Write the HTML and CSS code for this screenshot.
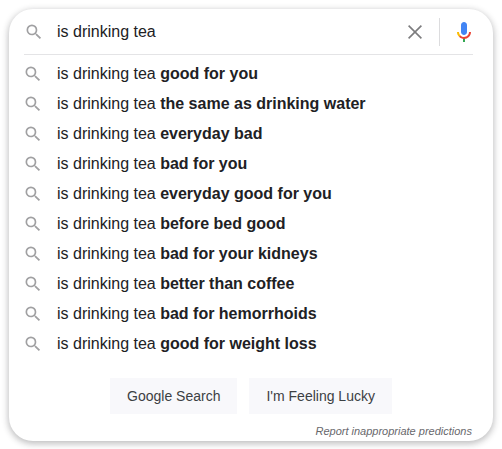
FILE: index.html
```html
<!DOCTYPE html>
<html lang="en">
<head>
    <meta charset="UTF-8">
    <meta name="viewport" content="width=device-width, initial-scale=1.0">
    <title>is drinking tea</title>
    <link rel="stylesheet" href="styles.css">
</head>
<body>
    <svg class="sprite" aria-hidden="true">
        <symbol id="magnifier" viewBox="0 0 24 24">
            <path d="M15.5 14h-.79l-.28-.27A6.471 6.471 0 0 0 16 9.5 6.5 6.5 0 1 0 9.5 16c1.61 0 3.09-.59 4.23-1.57l.27.28v.79l5 4.99L20.49 19l-4.99-5zm-6 0C7.01 14 5 11.99 5 9.5S7.01 5 9.5 5 14 7.01 14 9.5 11.99 14 9.5 14z"/>
        </symbol>
    </svg>
    <form class="search-card" action="#">
        <div class="search-bar">
            <svg class="icon"><use href="#magnifier"/></svg>
            <input type="text" class="search-input" name="q" value="is drinking tea" aria-label="Search" autocomplete="off">
            <button type="reset" class="icon-button clear" aria-label="Clear">
                <svg viewBox="0 0 24 24"><path d="M5.6 5.6l12.8 12.8M18.4 5.6L5.6 18.4"/></svg>
            </button>
            <button type="button" class="icon-button" aria-label="Search by voice">
                <svg viewBox="0 0 24 24">
                    <path fill="#4285f4" d="M12 15c1.66 0 3-1.31 3-2.97V5.01C15 3.35 13.66 2 12 2S9 3.34 9 5.01v7.02C9 13.69 10.34 15 12 15z"/>
                    <path fill="#34a853" d="M11 18.08h2V22h-2z"/>
                    <path fill="#fbbc05" d="M7.05 16.87C5.78 15.54 5 14.04 5 12h2c0 1.45.56 2.42 1.47 3.38v.32l-1.15 1.18z"/>
                    <path fill="#ea4335" d="M12 16.93a4.97 5.25 0 0 1-3.54-1.55l-1.41 1.49C8.31 18.21 10.07 19 12 19c3.87 0 6.99-2.92 6.99-7H17c0 2.92-2.24 4.93-5 4.93z"/>
                </svg>
            </button>
        </div>
        <hr class="separator">
        <ul class="suggestions">
            <li><a href="#"><svg class="icon"><use href="#magnifier"/></svg><span>is drinking tea <b>good for you</b></span></a></li>
            <li><a href="#"><svg class="icon"><use href="#magnifier"/></svg><span>is drinking tea <b>the same as drinking water</b></span></a></li>
            <li><a href="#"><svg class="icon"><use href="#magnifier"/></svg><span>is drinking tea <b>everyday bad</b></span></a></li>
            <li><a href="#"><svg class="icon"><use href="#magnifier"/></svg><span>is drinking tea <b>bad for you</b></span></a></li>
            <li><a href="#"><svg class="icon"><use href="#magnifier"/></svg><span>is drinking tea <b>everyday good for you</b></span></a></li>
            <li><a href="#"><svg class="icon"><use href="#magnifier"/></svg><span>is drinking tea <b>before bed good</b></span></a></li>
            <li><a href="#"><svg class="icon"><use href="#magnifier"/></svg><span>is drinking tea <b>bad for your kidneys</b></span></a></li>
            <li><a href="#"><svg class="icon"><use href="#magnifier"/></svg><span>is drinking tea <b>better than coffee</b></span></a></li>
            <li><a href="#"><svg class="icon"><use href="#magnifier"/></svg><span>is drinking tea <b>bad for hemorrhoids</b></span></a></li>
            <li><a href="#"><svg class="icon"><use href="#magnifier"/></svg><span>is drinking tea <b>good for weight loss</b></span></a></li>
        </ul>
        <div class="actions">
            <button type="submit" class="action">Google Search</button>
            <button type="submit" class="action">I'm Feeling Lucky</button>
        </div>
        <a class="report" href="#">Report inappropriate predictions</a>
    </form>
</body>
</html>
```

FILE: styles.css
```css
* {
    box-sizing: border-box;
}
body {
    margin: 0;
    padding: 9px;
    background: #fff;
    color: #212124;
    font-family: "Liberation Sans", Arial, sans-serif;
    font-size: 16px;
}
.sprite {
    display: none;
}
.search-card {
    display: flex;
    flex-direction: column;
    background: #fff;
    border-radius: 24px;
    box-shadow: 0 2px 6px 1px rgba(32, 33, 36, 0.28);
}
.search-bar {
    display: flex;
    align-items: center;
    height: 45px;
    padding: 0 17px 0 15px;
}
.icon {
    flex: none;
    width: 20px;
    height: 20px;
    margin-right: 13px;
    fill: #a0a0a2;
}
.search-input {
    flex: 1;
    min-width: 0;
    height: 34px;
    padding: 0;
    border: none;
    outline: none;
    background: transparent;
    color: inherit;
    font: inherit;
}
.icon-button {
    flex: none;
    padding: 0;
    border: none;
    background: none;
    cursor: pointer;
}
.icon-button svg {
    display: block;
    width: 24px;
    height: 24px;
}
.clear {
    height: 28px;
    margin-right: 12px;
    padding-right: 12px;
    border-right: 1px solid #dcdcde;
    fill: none;
    stroke: #7c7c7e;
    stroke-width: 1.6;
}
.separator {
    width: auto;
    margin: 0 20px 0 15px;
    border: none;
    border-top: 1px solid #e4e4e6;
}
.suggestions {
    margin: 0;
    padding: 4px 0 0;
    list-style: none;
}
.suggestions a {
    display: flex;
    align-items: center;
    height: 30px;
    padding: 0 14px;
    color: inherit;
    text-decoration: none;
}
.suggestions a:hover {
    background: #eee;
}
.suggestions .icon {
    margin-right: 14px;
}
.actions {
    display: flex;
    justify-content: center;
    gap: 12px;
    padding: 19px 0 11px;
}
.action {
    height: 36px;
    padding: 0 17px;
    border: none;
    background: #f8f8fb;
    color: #3c4043;
    font-family: inherit;
    font-size: 14px;
    cursor: pointer;
}
.report {
    align-self: flex-end;
    margin: 0 21px 4px 0;
    color: #68686c;
    font-size: 11px;
    font-style: italic;
    line-height: 12px;
    text-decoration: none;
}
```
